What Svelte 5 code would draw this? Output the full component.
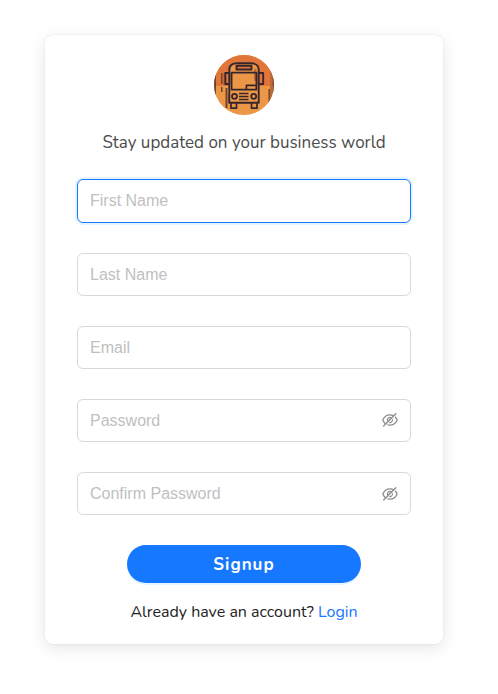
<script>
  const fields = [
    { label: 'First Name', type: 'text', active: true },
    { label: 'Last Name', type: 'text' },
    { label: 'Email', type: 'text' },
    { label: 'Password', type: 'password' },
    { label: 'Confirm Password', type: 'password' }
  ];
</script>

<main>
  <form class="card" onsubmit={(e) => e.preventDefault()}>
    <svg class="logo" viewBox="0 0 60 60" aria-label="Bus">
      <defs><clipPath id="round"><circle cx="30" cy="30" r="30" /></clipPath></defs>
      <g clip-path="url(#round)">
        <path fill="#eb9747" d="M0 0h60v60H0z" />
        <path fill="#e2763a" d="M0 0h60v31H45V14q0-7-8-7H23q-8 0-8 7v17H0z" />
        <path fill="#70442f" d="M11.500 33h2v20h-2zM7 18h1.500v11H7zM7 32h1.500v5H7zM54.500 34h1.500v18h-1.500zM0 20h2v20H0zM58.500 17h1.500v29h-1.500z" />
        <path fill="#bd6b38" d="M13.500 39h2v9h-2zM40 14h2.500v12H40zM56 15h2v35h-2zM9 18h1.500v12H9z" />
        <g fill="none" stroke="#35252c" stroke-width="1.9" stroke-linejoin="round">
          <path d="M15.300 47.700V15Q15.300 8.300 23 8.300h14Q44.700 8.300 44.700 15v32.700z" />
          <path fill="#e2763a" d="M22.500 10.800h15v3.700h-15zM11.300 18h4v11h-4zM44.700 18h4.500v11h-4.500z" />
          <path d="M17.600 17.700h24.800v17H17.600zM42.400 30.300h-10v4.400M17 48.200v5h5.500v-5M37.500 48.200v5H43v-5" stroke-width="1.700" />
          <circle cx="20.500" cy="41.300" r="2.500" stroke-width="1.800" /><circle cx="39.700" cy="41.300" r="2.500" stroke-width="1.800" />
          <path d="M25 38.500h9.500M25 41.500h9.500M25 44.500h9.500" stroke-width="1.400" />
        </g>
      </g>
    </svg>
    <h1>Stay updated on your business world</h1>
    <div class="fields">
      {#each fields as field}
        <div class="field" class:active={field.active}>
          <input type={field.type} placeholder={field.label} aria-label={field.label} />
          {#if field.type === 'password'}
            <svg class="eye" viewBox="64 64 896 896" fill="currentColor" aria-hidden="true">
              <path d="M942.2 486.2Q889.47 375.11 816.7 305l-50.88 50.88C807.31 395.53 843.45 447.4 874.7 512 791.5 684.2 673.4 766 512 766q-72.67 0-133.87-22.38L323 798.75Q408 838 512 838q288.3 0 430.2-300.3a60.29 60.29 0 000-51.5zm-63.57-320.64L836 122.88a8 8 0 00-11.32 0L715.31 232.2Q624.86 186 512 186q-288.3 0-430.2 300.3a60.3 60.3 0 000 51.5q56.69 119.4 136.5 191.41L112.48 835a8 8 0 000 11.31L155.17 889a8 8 0 0011.31 0l712.15-712.12a8 8 0 000-11.32zM149.3 512C232.6 339.8 350.7 258 512 258c54.54 0 104.13 9.36 149.12 28.39l-70.3 70.3a176 176 0 00-238.13 238.13l-83.42 83.42C223.1 637.49 183.3 582.28 149.3 512zm246.7 0a112.11 112.11 0 01146.2-106.69L401.31 546.2A112 112 0 01396 512z" />
              <path d="M508 624c-3.46 0-6.87-.16-10.25-.47l-52.82 52.82a176.09 176.09 0 00227.42-227.42l-52.82 52.82c.31 3.38.47 6.79.47 10.25a111.94 111.94 0 01-112 112z" />
            </svg>
          {/if}
        </div>
      {/each}
    </div>
    <button>Signup</button>
    <p>Already have an account? <a href="#login">Login</a></p>
  </form>
</main>

<style>
  :global(body) { background: #fff; overflow: hidden; }
  main {
    box-sizing: border-box;
    width: 498px;
    height: 694px;
    padding: 35px 55px 50px 45px;
    font-family: Nunito, "Noto Sans", sans-serif;
  }
  .card {
    box-sizing: border-box;
    height: 609px;
    padding: 20px 32px 0;
    display: flex;
    flex-direction: column;
    align-items: center;
    border-radius: 8px;
    background: #fff;
    box-shadow: 0 0 2px rgba(0, 0, 0, 0.1), 0 4px 16px rgba(0, 0, 0, 0.1);
  }
  .logo { width: 60px; height: 60px; flex: none; }
  h1 {
    margin: 16px 0 24.430px;
    font-size: 17px;
    line-height: 24px;
    font-weight: 400;
    color: #4b4b4b;
    white-space: nowrap;
  }
  .fields { width: 334px; display: flex; flex-direction: column; gap: 30px; }
  .field {
    box-sizing: border-box;
    height: 43.140px;
    padding: 0 12px;
    display: flex;
    align-items: center;
    border: 1px solid #d9d9d9;
    border-radius: 6px;
  }
  .field.active { border-color: #1677ff; box-shadow: 0 0 0 2px rgba(5, 145, 255, 0.1); }
  input {
    flex: 1;
    min-width: 0;
    padding: 0;
    border: 0;
    outline: 0;
    background: none;
    font: 16px/25.140px "Liberation Sans", Arial, sans-serif;
  }
  input::placeholder { color: #bfbfbf; opacity: 1; }
  .eye { width: 16px; height: 16px; margin-top: 0.100px; color: #8c8c8c; }
  button {
    width: 234px;
    height: 38px;
    margin-top: 29.900px;
    padding: 1px 0 0;
    border: 0;
    border-radius: 19px;
    background: #1677ff;
    box-shadow: 0 2px 0 rgba(5, 145, 255, 0.1);
    color: #fff;
    font: 700 17px/37px Nunito, "Noto Sans", sans-serif;
    letter-spacing: 1px;
  }
  p { margin: 17px 0 0; font-size: 16px; line-height: 24px; color: #222; white-space: nowrap; }
  a { color: #1677ff; text-decoration: none; }
</style>
